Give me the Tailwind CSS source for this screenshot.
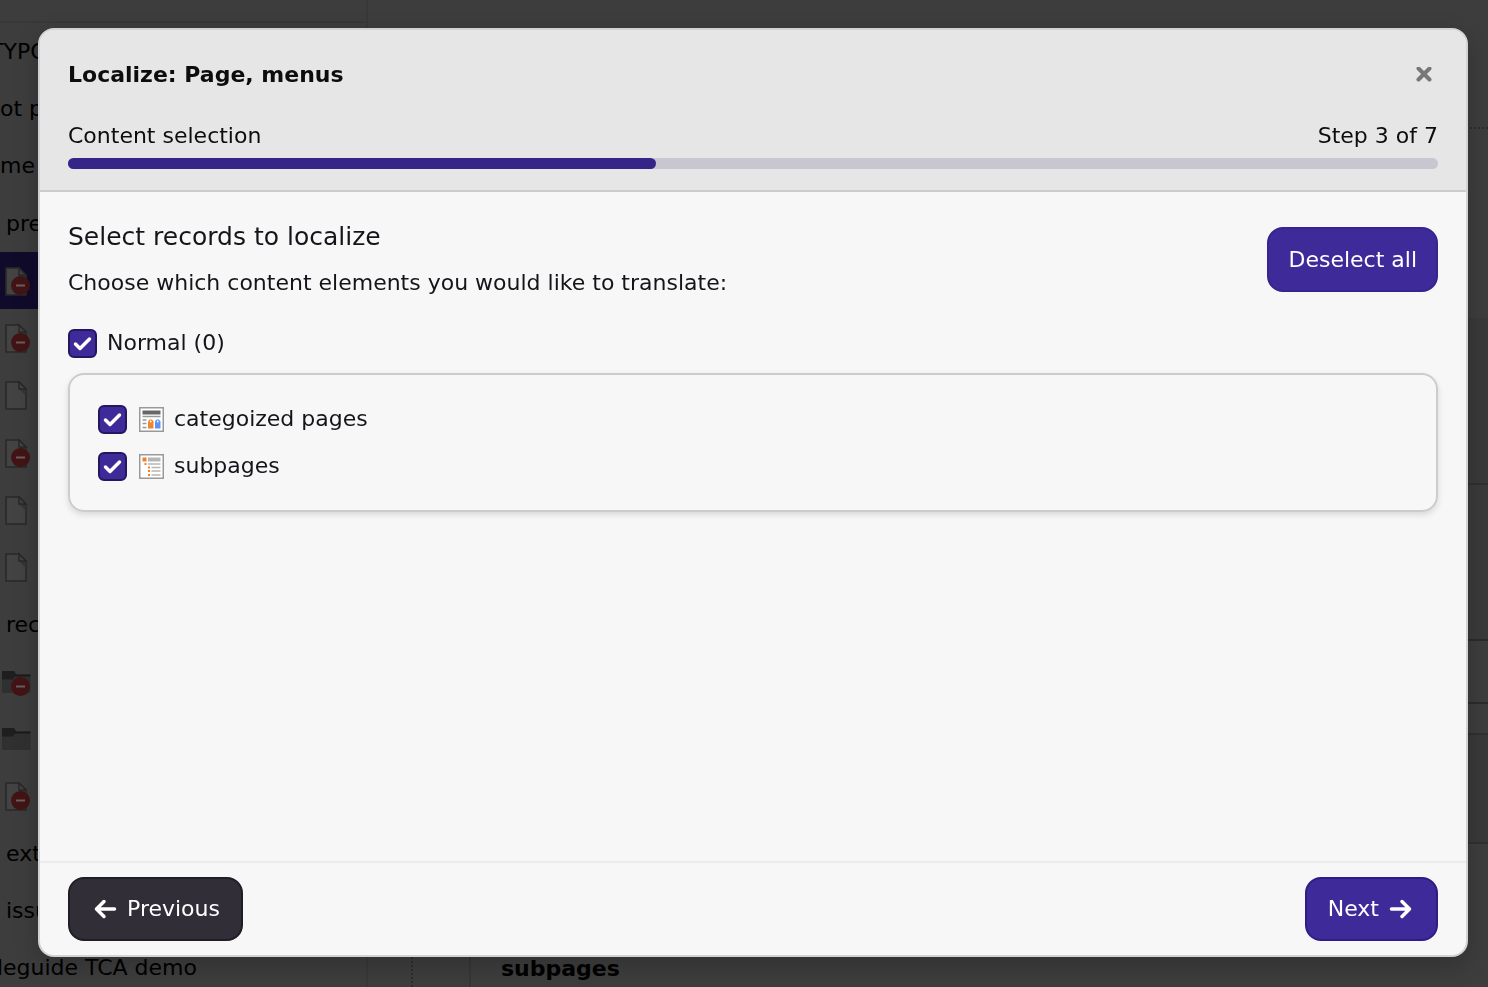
<!DOCTYPE html>
<html lang="en">
<head>
  <meta charset="UTF-8" />
  <meta name="viewport" content="width=device-width, initial-scale=1.0"/>
  <title>Localize: Page, menus</title>
  <script src="https://cdn.jsdelivr.net/npm/@tailwindcss/browser@4"></script>
</head>
<body class="h-screen overflow-hidden bg-[#3d3d3d] font-['Verdana','DejaVu_Sans',sans-serif] text-[22px] leading-8 text-[#15141a]">

  <!-- Shared icons -->
  <svg class="hidden">
    <symbol id="page" viewBox="0 0 32 32">
      <path d="M6 3h13l7 7v20H6z" fill="#434343" stroke="#282828" stroke-width="1.500"/>
      <path d="M19 10l7 7v-7z" fill="#343434"/>
      <path d="M19 3v7h7z" fill="#434343" stroke="#282828" stroke-width="1.500"/>
    </symbol>
    <symbol id="folder" viewBox="0 0 32 32">
      <path d="M2 5h12l2 3.500h14.500V27H2z" fill="#303030"/>
      <path d="M2 5h12l2 3.500-3 5H2z" fill="#1e1e1e"/>
      <path d="M15 9.500h15.500" stroke="#1a1a1a" stroke-width="2"/>
    </symbol>
    <symbol id="hidden-mark" viewBox="0 0 32 32">
      <circle cx="20.500" cy="20.500" r="9.500" fill="#421415"/>
      <path d="M16 20.500h9" stroke="#6b5d5d" stroke-width="2"/>
    </symbol>
    <symbol id="check" viewBox="0 0 29 29">
      <path d="M7.500 15l4.500 4.500L21.500 10" fill="none" stroke="#fff" stroke-width="3.500" stroke-linecap="round" stroke-linejoin="round"/>
    </symbol>
  </svg>

  <!-- Backend behind the dialog -->
  <div class="flex h-full overflow-hidden text-black" aria-hidden="true">
    <div class="w-[368px] shrink-0 border-r-2 border-[#383838]">
      <div class="h-[23px] border-b-2 border-[#383838]"></div>
      <ul class="grid h-[974px] auto-rows-fr items-stretch whitespace-nowrap *:flex *:items-center">
        <li><span class="-ml-2.5">TYPO</span></li>
        <li><span>ot p</span></li>
        <li><span>me</span></li>
        <li><span class="ml-1.5">pre</span></li>
        <li class="bg-[#110b2b]"><svg class="size-8"><use href="#page"/><use href="#hidden-mark"/></svg></li>
        <li><svg class="size-8"><use href="#page"/><use href="#hidden-mark"/></svg></li>
        <li><svg class="size-8"><use href="#page"/></svg></li>
        <li><svg class="size-8"><use href="#page"/><use href="#hidden-mark"/></svg></li>
        <li><svg class="size-8"><use href="#page"/></svg></li>
        <li><svg class="size-8"><use href="#page"/></svg></li>
        <li><span class="ml-1.5">rec</span></li>
        <li><svg class="size-8"><use href="#folder"/><use href="#hidden-mark"/></svg></li>
        <li><svg class="size-8"><use href="#folder"/></svg></li>
        <li><svg class="size-8"><use href="#page"/><use href="#hidden-mark"/></svg></li>
        <li><span class="ml-1.5">ext</span></li>
        <li><span class="ml-1.5">issu</span></li>
        <li class="w-[197px] justify-end overflow-hidden"><span>yleguide TCA demo</span></li>
      </ul>
    </div>
    <div class="mt-32 w-[45px] shrink-0 border-r-2 border-dotted border-[#2c2c2c]"></div>
    <div class="mt-32 w-[58px] shrink-0 border-r-2 border-[#363636]"></div>
    <div class="flex grow flex-col">
      <div class="h-[129px] border-b-2 border-dotted border-[#2b2b2b]"></div>
      <div class="h-[189px]"></div>
      <div class="h-[167px] border-b-2 border-[#303030] bg-[#393939]"></div>
      <div class="h-[156px] border-b-2 border-[#2b2b2b] bg-[#3a3a3a]"></div>
      <div class="h-[63px] border-b-2 border-[#2b2b2b]"></div>
      <div class="h-[31px] border-b-2 border-[#303030]"></div>
      <div class="h-[109px] border-b-2 border-[#303030] bg-[#393939]"></div>
      <div class="pt-[109px] pl-[30px] font-bold">subpages</div>
    </div>
  </div>

  <!-- Dialog -->
  <div class="fixed inset-0 flex pt-7 pr-5 pb-[30px] pl-[38px]">
    <div role="dialog" aria-labelledby="title" class="flex grow flex-col overflow-hidden rounded-2xl border-2 border-[#d2d2d4] bg-[#f7f7f7] shadow-[0_8px_24px_rgba(0,0,0,0.2)]">
      <header class="border-b-2 border-[#cccccc] bg-[#e6e6e6] px-7 pt-[29px] pb-[21px] text-[#0d0d0d]">
        <div class="flex items-center justify-between">
          <h1 id="title" class="font-bold">Localize: Page, menus</h1>
          <button type="button" aria-label="Close" class="flex size-7 items-center justify-center text-[#777777]">
            <svg class="size-4" viewBox="0 0 16 16"><path d="M2.500 1.500l11 11M13.500 1.500l-11 11" stroke="currentColor" stroke-width="4" stroke-linecap="round"/></svg>
          </button>
        </div>
        <div class="mt-[29px] flex justify-between">
          <span>Content selection</span>
          <span>Step 3 of 7</span>
        </div>
        <div role="progressbar" aria-label="Content selection" aria-valuemin="0" aria-valuemax="7" aria-valuenow="3" class="mt-1.5 h-[11px] overflow-hidden rounded-full bg-[#c8c6d1]">
          <div class="h-full rounded-r-full bg-[#352587]" style="width: 42.9%"></div>
        </div>
      </header>

      <main class="grow px-7 pt-[29px]">
        <div class="flex items-start justify-between">
          <div>
            <h2 class="text-[25px]">Select records to localize</h2>
            <p class="mt-3.5">Choose which content elements you would like to translate:</p>
          </div>
          <button type="button" class="mt-1.5 h-[65px] rounded-2xl border-2 border-[#36258c] bg-[#3e2a99] px-[19px] text-white">Deselect all</button>
        </div>

        <label class="mt-7 flex w-fit items-center gap-2.5">
          <span class="grid size-[29px]">
            <input type="checkbox" checked class="peer col-start-1 row-start-1 size-full appearance-none rounded-md border-2 border-[#6b6b76] bg-white checked:border-[#24165f] checked:bg-[#3e2a99]" />
            <svg class="pointer-events-none invisible col-start-1 row-start-1 size-full peer-checked:visible"><use href="#check"/></svg>
          </span>
          Normal (0)
        </label>

        <div class="mt-3.5 flex flex-col gap-[15px] rounded-2xl border-2 border-[#cccccc] px-7 py-7 shadow-[0_3px_6px_rgba(0,0,0,0.12)]">
          <label class="flex w-fit items-center">
            <span class="grid size-[29px]">
              <input type="checkbox" checked class="peer col-start-1 row-start-1 size-full appearance-none rounded-md border-2 border-[#6b6b76] bg-white checked:border-[#24165f] checked:bg-[#3e2a99]" />
              <svg class="pointer-events-none invisible col-start-1 row-start-1 size-full peer-checked:visible"><use href="#check"/></svg>
            </span>
            <svg class="mr-2.5 ml-3 size-[25px]" viewBox="0 0 25 25">
              <path d="M.75 .75h23.500v23.500H.75z" fill="#fff" stroke="#999" stroke-width="1.500"/>
              <path d="M3.500 3.500h18v4h-18z" fill="#666"/>
              <path d="M3.500 9.500h18M3.500 13h4M3.500 16.500h4M3.500 20.500h4" stroke="#999" stroke-width="1.300"/>
              <path d="M9 21.500v-7l1.500-2h2.500l1.500 2v7z" fill="#f0862e"/>
              <path d="M16 21.500v-7l1.500-2h2.500l1.500 2v7z" fill="#5d93f5"/>
              <circle cx="11.750" cy="14.500" r=".9" fill="#fff"/>
              <circle cx="18.750" cy="14.500" r=".9" fill="#fff"/>
            </svg>
            categoized pages
          </label>
          <label class="flex w-fit items-center">
            <span class="grid size-[29px]">
              <input type="checkbox" checked class="peer col-start-1 row-start-1 size-full appearance-none rounded-md border-2 border-[#6b6b76] bg-white checked:border-[#24165f] checked:bg-[#3e2a99]" />
              <svg class="pointer-events-none invisible col-start-1 row-start-1 size-full peer-checked:visible"><use href="#check"/></svg>
            </span>
            <svg class="mr-2.5 ml-3 size-[25px]" viewBox="0 0 25 25">
              <path d="M.75 .75h23.500v23.500H.75z" fill="#fff" stroke="#999" stroke-width="1.500"/>
              <path d="M3.500 3.500h4v4h-4zM5.500 9h2v2h-2zM9 12.500h2v2H9zM9 16h2v2H9zM9 20h2v2H9z" fill="#f0802a"/>
              <path d="M9 3.500h12.500v4H9z" fill="#b5b5b5"/>
              <path d="M9 10h12.500M12.500 13.500h9M12.500 17h9M12.500 21h9" stroke="#b5b5b5" stroke-width="1.400"/>
            </svg>
            subpages
          </label>
        </div>
      </main>

      <footer class="flex items-center justify-between border-t-2 border-[#ebebeb] px-7 py-3.5">
        <button type="button" class="flex h-16 items-center gap-2.5 rounded-2xl border-2 border-[#1f1d25] bg-[#312e38] px-[21px] text-white">
          <svg class="size-[26px]" viewBox="0 0 26 26"><path d="M23.500 13H6M13 5.500L5.500 13l7.500 7.500" fill="none" stroke="currentColor" stroke-width="3.500" stroke-linecap="round" stroke-linejoin="round"/></svg>
          Previous
        </button>
        <button type="button" class="flex h-16 items-center gap-2.5 rounded-2xl border-2 border-[#2f1d85] bg-[#3e2a99] px-[21px] text-white">
          Next
          <svg class="size-[26px]" viewBox="0 0 26 26"><path d="M2.500 13H20M13 5.500l7.500 7.500-7.500 7.500" fill="none" stroke="currentColor" stroke-width="3.500" stroke-linecap="round" stroke-linejoin="round"/></svg>
        </button>
      </footer>
    </div>
  </div>
</body>
</html>
